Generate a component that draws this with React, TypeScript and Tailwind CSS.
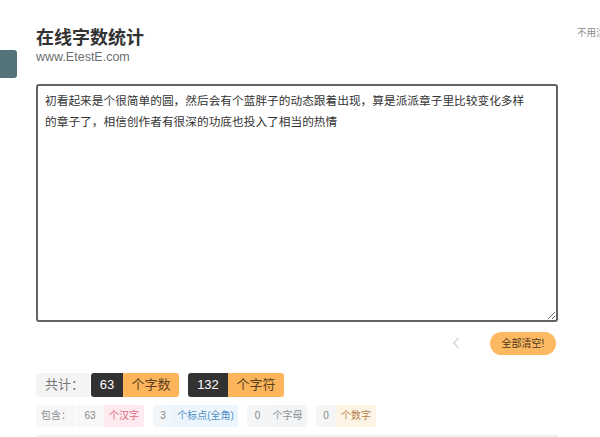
import React from "react";

const sample =
  "初看起来是个很简单的圆，然后会有个蓝胖子的动态跟着出现，算是派派章子里比较变化多样的章子了，相信创作者有很深的功底也投入了相当的热情";

const details = [
  { num: "63", label: "个汉字", numBg: "bg-[#f8f8f9]", labelCls: "bg-[#fdeaee] text-[#e0697d]", numW: "w-[28px]", labelW: "w-[40px]" },
  { num: "3", label: "个标点(全角)", numBg: "bg-[#f1f6fb]", labelCls: "bg-[#edf5fc] text-[#4f8fc6]", numW: "w-[20px]", labelW: "w-[65px]" },
  { num: "0", label: "个字母", numBg: "bg-[#f4f5f6]", labelCls: "bg-[#f2f4f5] text-[#8a9096]", numW: "w-[21px]", labelW: "w-[39px]" },
  { num: "0", label: "个数字", numBg: "bg-[#f5f5f5]", labelCls: "bg-[#fdf4e6] text-[#b4834a]", numW: "w-[20px]", labelW: "w-[40px]" },
];

export default function App() {
  return (
    <div
      className="relative h-[437px] w-[600px] overflow-hidden bg-white"
      style={{ fontFamily: '"Liberation Sans", "Noto Sans CJK SC", sans-serif' }}
    >
      {/* side tab */}
      <div className="absolute left-0 top-[50px] h-[28px] w-[17px] rounded-r-[3px] bg-[#52737a]" />

      <div className="flex pl-[36px]">
        <div className="w-[522px]">
          <div className="pt-[27px]">
            <h1 className="text-[18px] font-bold leading-[22px] text-[#333]">在线字数统计</h1>
            <p className="text-[12.5px] leading-[16px] text-[#6b6f73]">www.EtestE.com</p>
          </div>

          <textarea
            defaultValue={sample}
            className="mt-[19px] block h-[238px] w-[522px] rounded-[3px] border-2 border-[#5f6466] pb-[4px] pl-[7px] pr-[25px] pt-[4px] text-[11.7px] leading-[21px] text-[#333] outline-none"
          />

          <div className="mt-[10px] flex items-center justify-end gap-[30px] pr-[2px]">
            <svg width="8" height="12" viewBox="0 0 8 12" className="mb-[1px]">
              <path d="M6 1.5 L2 6 L6 10.5" fill="none" stroke="#d4d6d8" strokeWidth="1.6" strokeLinecap="round" />
            </svg>
            <button className="h-[23px] w-[66px] rounded-full bg-[#fdb862] text-[10px] text-[#4a3620]">
              全部清空!
            </button>
          </div>

          <div className="mt-[18px] flex h-[24px] items-stretch text-[13px] leading-[24px]">
            <div className="w-[54px] rounded-[3px] bg-[#f4f4f4] pl-[9px] text-[#777]">共计：</div>
            <div className="ml-[1px] w-[32px] rounded-l-[3px] bg-[#323232] text-center text-white">63</div>
            <div className="w-[56px] rounded-r-[3px] bg-[#fdb55c] text-center text-[#5a4020]">个字数</div>
            <div className="ml-[9px] w-[40px] rounded-l-[3px] bg-[#323232] text-center text-white">132</div>
            <div className="w-[56px] rounded-r-[3px] bg-[#fdb55c] text-center text-[#5a4020]">个字符</div>
          </div>

          <div className="mt-[8px] flex h-[22px] items-stretch text-[10px] leading-[22px]">
            <div className="w-[39px] rounded-[2px] bg-[#f7f7f7] pl-[5px] text-[#8d9194]">包含：</div>
            {details.map((d, i) => (
              <div key={i} className={`flex ${i === 0 ? "ml-[1px]" : "ml-[9px]"}`}>
                <div className={`${d.numW} ${d.numBg} rounded-l-[2px] text-center text-[#888]`}>{d.num}</div>
                <div className={`${d.labelW} ${d.labelCls} whitespace-nowrap rounded-r-[2px] text-center`}>{d.label}</div>
              </div>
            ))}
          </div>

          <div className="mt-[8px] h-[2px] bg-[#f0f0f0]" />
        </div>

        <div className="ml-[19px] whitespace-nowrap pt-[27px] text-[9.5px] leading-[12px] text-[#8a8a8a]">
          不用注册，直接使用
        </div>
      </div>
    </div>
  );
}
